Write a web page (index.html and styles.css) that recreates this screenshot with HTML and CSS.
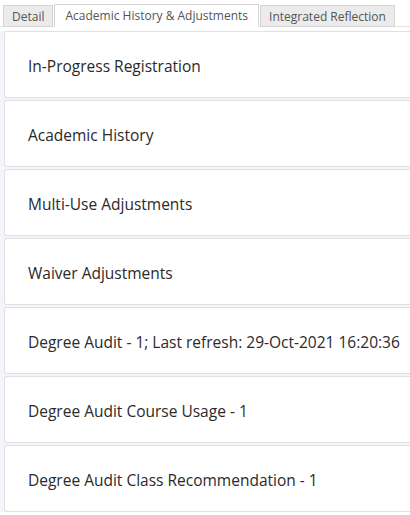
FILE: index.html
```html
<!DOCTYPE html>
<html>
<head>
<meta charset="utf-8">
<link rel="stylesheet" href="styles.css">
</head>
<body>
<div class="tabs">
  <div class="tab">Detail</div>
  <div class="tab active">Academic History &amp; Adjustments</div>
  <div class="tab">Integrated Reflection</div>
</div>
<div class="panel">
  <div class="card">In-Progress Registration</div>
  <div class="card">Academic History</div>
  <div class="card">Multi-Use Adjustments</div>
  <div class="card">Waiver Adjustments</div>
  <div class="card">Degree Audit - 1; Last refresh: 29-Oct-2021 16:20:36</div>
  <div class="card">Degree Audit Course Usage - 1</div>
  <div class="card">Degree Audit Class Recommendation - 1</div>
</div>
</body>
</html>
```
FILE: styles.css
```css
html, body {
  margin: 0;
  padding: 0;
  overflow: hidden;
}
body {
  background: #ffffff;
  font-family: "Open Sans", "Noto Sans", sans-serif;
  width: 410px;
}
.tabs {
  display: flex;
  align-items: flex-end;
  padding: 3px 0 0 3px;
  border-bottom: 1px solid #e3e3e3;
  background: #fff;
  height: 23px;
}
.tab {
  height: 22px;
  box-sizing: border-box;
  padding: 0 8px;
  font-size: 12px;
  line-height: 21px;
  color: #555;
  background: #ebebeb;
  border: 1px solid #d4d4d4;
  margin-right: 1px;
  margin-bottom: -1px;
}
.tab.active {
  background: #fff;
  border-bottom-color: #fff;
  height: 23px;
  padding: 0 10px;
}
.panel {
  margin-top: 4px;
  background: #f3f5f8;
  padding: 0 0 0 4px;
  display: flex;
  flex-direction: column;
  gap: 2px;
}
.card {
  height: 67px;
  box-sizing: border-box;
  background: #fff;
  border: 1px solid #dde0e4;
  border-right: none;
  border-radius: 3px 0 0 3px;
  padding-left: 23px;
  padding-top: 2px;
  display: flex;
  align-items: center;
  font-size: 15.5px;
  color: #2a2a2a;
}
```
